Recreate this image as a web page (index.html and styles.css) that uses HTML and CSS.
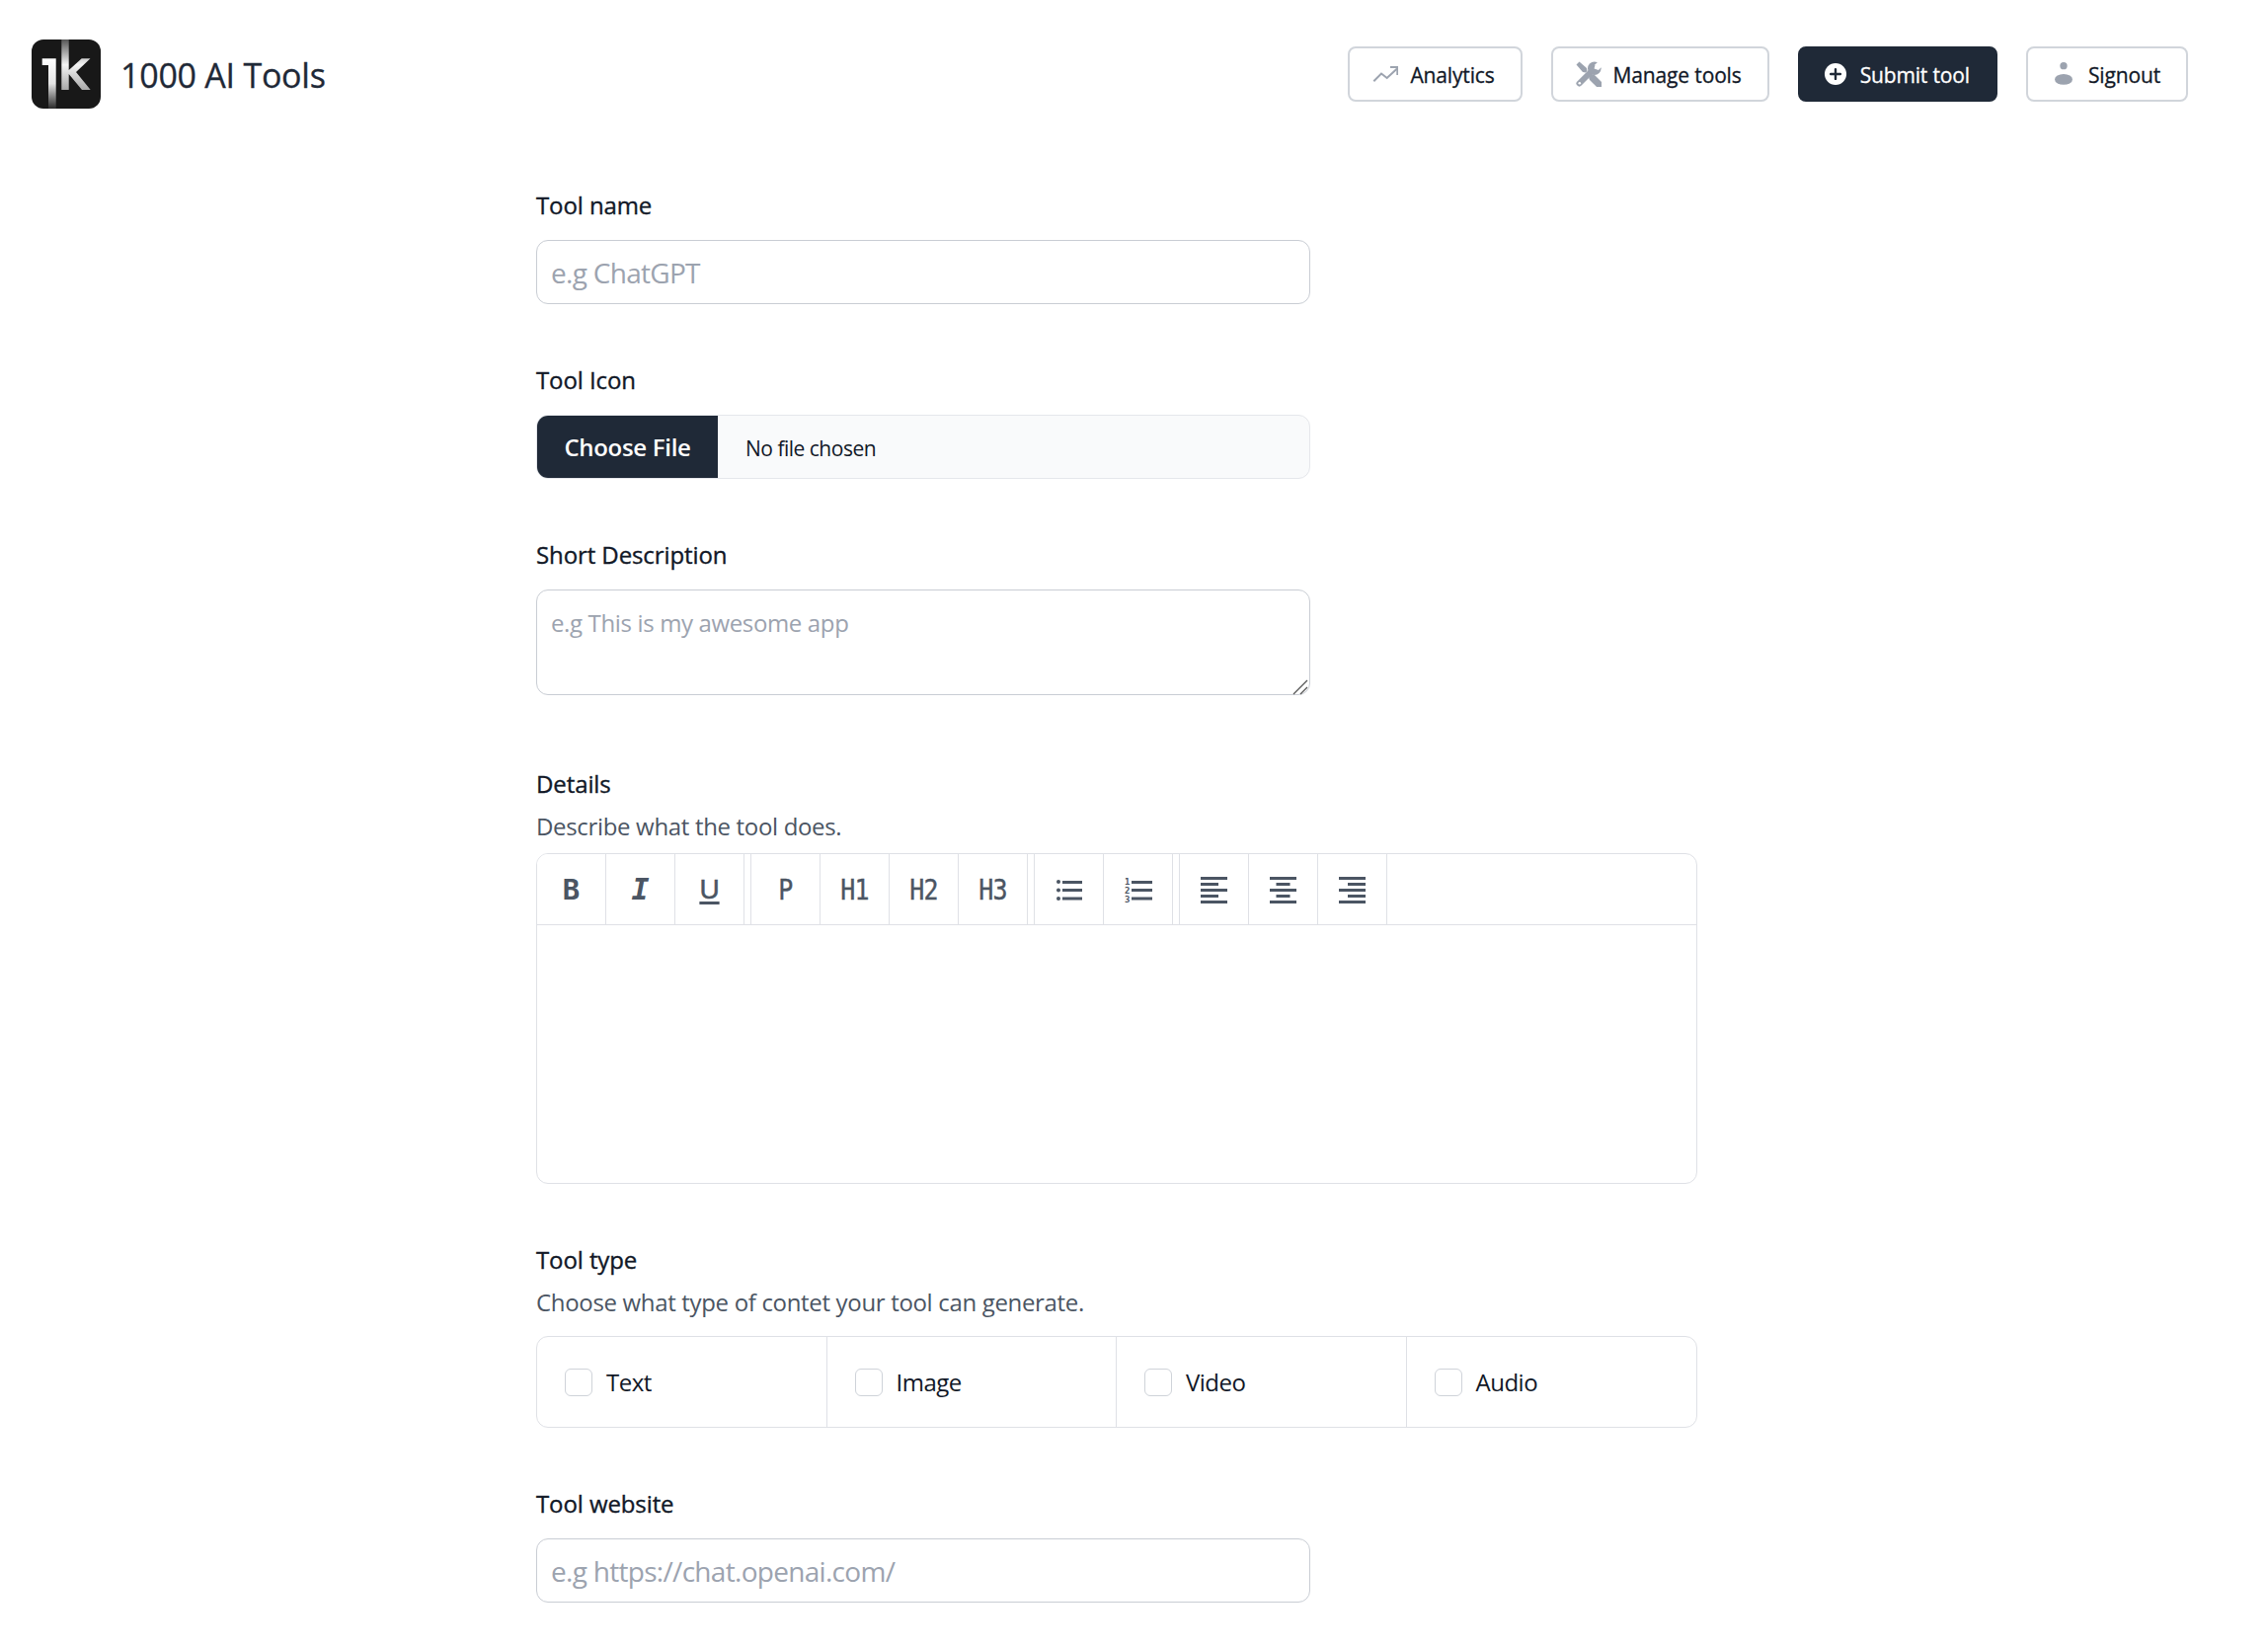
FILE: index.html
```html
<!DOCTYPE html>
<html lang="en">
<head>
<meta charset="utf-8">
<title>1000 AI Tools</title>
<link rel="stylesheet" href="styles.css">
</head>
<body>
<header class="topbar">
  <a class="brand">
    <svg class="logo" viewBox="0 0 70 70" aria-hidden="true">
      <defs>
        <linearGradient id="one" x1="0" y1="0" x2="0" y2="1"><stop offset="0" stop-color="#fff"/><stop offset=".5" stop-color="#e4e4e4"/><stop offset="1" stop-color="#2a2a2a"/></linearGradient>
        <linearGradient id="kay" x1="0" y1="0" x2="0" y2="1"><stop offset="0" stop-color="#555"/><stop offset=".5" stop-color="#f4f4f4"/><stop offset="1" stop-color="#a8a8a8"/></linearGradient>
      </defs>
      <rect width="70" height="70" rx="12" fill="#181818"/>
      <polygon points="10.7,19.3 24.7,19.3 24.7,70 17,70 17,26 10.7,26" fill="url(#one)"/>
      <polygon points="30.3,0 37.7,0 37.7,31 50.7,19.3 59.5,19.3 45,33 59.7,51 51,51 37.7,35 37.7,51 30.3,51" fill="url(#kay)"/>
    </svg>
    <span class="brand-name">1000 AI Tools</span>
  </a>
  <nav class="actions">
    <a class="btn">
      <svg class="btn-icon" viewBox="0 0 26 26" fill="none" stroke="#9ca3af" stroke-width="2" stroke-linejoin="miter"><path d="M1.300 20.300L9 12.500l5.700 4.500L25 7.500"/><path d="M18 6h7.300v8"/></svg>
      <span class="btn-label">Analytics</span>
    </a>
    <a class="btn">
      <svg class="btn-icon" viewBox="0 0 26 26">
        <path d="M0.500 3.500L3.500 0.500l7.500 6.500 .5 3-1.500 1.500-3-.5z" fill="#9ca3af"/>
        <path d="M17 17l7 7" stroke="#9ca3af" stroke-width="7" stroke-linecap="round"/>
        <path d="M3.500 22.500L15 11" stroke="#9ca3af" stroke-width="6" stroke-linecap="round"/>
        <circle cx="18.800" cy="7.200" r="6.800" fill="#9ca3af"/>
        <path d="M18.600 7.400l1-4.200 4-3.700h3v6l-3.700 3.500z" fill="#fff"/>
        <circle cx="3.800" cy="22.200" r="1.300" fill="#fff"/>
      </svg>
      <span class="btn-label">Manage tools</span>
    </a>
    <a class="btn btn-dark">
      <svg class="btn-icon" viewBox="0 0 24 24"><circle cx="12" cy="12" r="10.200" fill="#fff"/><path d="M12 7.500v9M7.500 12h9" stroke="#1f2937" stroke-width="2.200" stroke-linecap="round"/></svg>
      <span class="btn-label">Submit tool</span>
    </a>
    <a class="btn">
      <svg class="btn-icon" viewBox="0 0 24 24" fill="#9ca3af"><circle cx="12" cy="4.300" r="3.400"/><ellipse cx="12" cy="17" rx="8.300" ry="5"/></svg>
      <span class="btn-label">Signout</span>
    </a>
  </nav>
</header>

<main class="form">
  <section class="field">
    <label class="label" for="name">Tool name</label>
    <input class="input" id="name" type="text" placeholder="e.g ChatGPT">
  </section>

  <section class="field">
    <label class="label" for="icon">Tool Icon</label>
    <input class="file" id="icon" type="file">
  </section>

  <section class="field field-short">
    <label class="label" for="short">Short Description</label>
    <div class="textarea-wrap">
      <textarea class="textarea" id="short" placeholder="e.g This is my awesome app"></textarea>
      <svg class="grip" viewBox="0 0 16 16" fill="none" stroke="#555" stroke-width="1.300"><path d="M1 15L15 1M8 15l7-7"/></svg>
    </div>
  </section>

  <section class="field">
    <label class="label label-tight">Details</label>
    <p class="hint">Describe what the tool does.</p>
    <div class="editor">
      <div class="toolbar">
        <div class="tool-group">
          <button class="tool glyph-b">B</button>
          <button class="tool glyph-i">I</button>
          <button class="tool glyph-u">U</button>
        </div>
        <div class="tool-group">
          <button class="tool glyph-h"><span>P</span></button>
          <button class="tool glyph-h"><span>H1</span></button>
          <button class="tool glyph-h"><span>H2</span></button>
          <button class="tool glyph-h"><span>H3</span></button>
        </div>
        <div class="tool-group">
          <button class="tool"><svg class="tool-icon" viewBox="0 0 28 28" fill="#4b5563"><circle cx="3" cy="6" r="2"/><circle cx="3" cy="14.500" r="2"/><circle cx="3" cy="23" r="2"/><rect x="7" y="5" width="20" height="3"/><rect x="7" y="13" width="20" height="3"/><rect x="7" y="21.500" width="20" height="3"/></svg></button>
          <button class="tool"><svg class="tool-icon" viewBox="0 0 28 28" fill="#4b5563"><text class="ol-num" x="0" y="9">1</text><text class="ol-num" x="0" y="18">2</text><text class="ol-num" x="0" y="27">3</text><rect x="7" y="5" width="21" height="3"/><rect x="7" y="13" width="21" height="3"/><rect x="7" y="21.500" width="21" height="3"/></svg></button>
        </div>
        <div class="tool-group">
          <button class="tool"><svg class="tool-icon" viewBox="0 0 28 28" fill="#4b5563"><rect y="1" width="27" height="3"/><rect y="7" width="18" height="3"/><rect y="13" width="27" height="3"/><rect y="19" width="18" height="3"/><rect y="25" width="27" height="3"/></svg></button>
          <button class="tool"><svg class="tool-icon" viewBox="0 0 28 28" fill="#4b5563"><rect y="1" width="27" height="3"/><rect x="6.500" y="7" width="14" height="3"/><rect y="13" width="27" height="3"/><rect x="6.500" y="19" width="14" height="3"/><rect y="25" width="27" height="3"/></svg></button>
          <button class="tool"><svg class="tool-icon" viewBox="0 0 28 28" fill="#4b5563"><rect y="1" width="27" height="3"/><rect x="9" y="7" width="18" height="3"/><rect y="13" width="27" height="3"/><rect x="9" y="19" width="18" height="3"/><rect y="25" width="27" height="3"/></svg></button>
        </div>
      </div>
      <div class="editor-body"></div>
    </div>
  </section>

  <section class="field">
    <label class="label label-tight">Tool type</label>
    <p class="hint hint-wide">Choose what type of contet your tool can generate.</p>
    <div class="choices">
      <label class="choice"><input class="check" type="checkbox">Text</label>
      <label class="choice"><input class="check" type="checkbox">Image</label>
      <label class="choice"><input class="check" type="checkbox">Video</label>
      <label class="choice"><input class="check" type="checkbox">Audio</label>
    </div>
  </section>

  <section class="field">
    <label class="label" for="site">Tool website</label>
    <input class="input" id="site" type="text" placeholder="e.g https://chat.openai.com/">
  </section>
</main>
</body>
</html>
```
FILE: styles.css
```css
* { box-sizing: border-box; }
html, body { margin: 0; padding: 0; background: #fff; }
body {
  font-family: "Open Sans", "Noto Sans", "Liberation Sans", sans-serif;
  color: #111827;
  overflow: hidden;
  height: 1669px;
}
.topbar {
  display: flex;
  justify-content: space-between;
  align-items: flex-start;
  padding: 40px 81px 40px 32px;
  height: 191px;
}
.brand { display: flex; align-items: center; gap: 20px; height: 70px; }
.logo { width: 70px; height: 70px; display: block; }
.brand-name { font-size: 34px; color: #1f2937; letter-spacing: -.25px; padding-top: 2px; -webkit-text-stroke: .3px #1f2937; }
.actions { display: flex; gap: 29px; margin-top: 7px; }
.btn {
  display: flex;
  align-items: center;
  gap: 12px;
  height: 56px;
  padding: 0 26px 0 23px;
  border: 2px solid #d1d5db;
  border-radius: 8px;
  font-size: 21px;
  letter-spacing: -.15px;
  color: #111827;
  background: #fff;
  -webkit-text-stroke: .3px currentColor;
}
.btn-label { padding-top: 2px; }
.btn-dark { background: #1f2937; border-color: #1f2937; color: #fff; }
.btn-icon { width: 26px; height: 26px; flex: none; }

.form { margin-left: 543px; width: 1176px; }
.field { margin-bottom: 60px; }
.field-short { margin-bottom: 73px; }
.label {
  display: block;
  font-size: 24px;
  line-height: 34px;
  padding-bottom: 2px;
  margin-bottom: 16px;
  color: #111827;
  letter-spacing: -.1px;
  -webkit-text-stroke: .35px #111827;
}
.label-tight { margin-bottom: 6px; }
.hint {
  margin: 0 0 9px;
  font-size: 24px;
  line-height: 36px;
  letter-spacing: -.33px;
  color: #4b5563;
}
.hint-wide { margin-bottom: 16px; }
.input, .textarea {
  display: block;
  width: 784px;
  border: 1px solid #c9cdd4;
  border-radius: 12px;
  background: #fff;
  font-family: inherit;
  outline: none;
  color: #111827;
}
.input { height: 65px; padding: 0 14px; font-size: 28px; letter-spacing: -.7px; }
.textarea { height: 107px; padding: 16px 14px; font-size: 24px; line-height: 34px; letter-spacing: -.36px; resize: none; }
.input::placeholder, .textarea::placeholder { color: #9ca3af; opacity: 1; }
.textarea-wrap { position: relative; width: 784px; }
.grip { position: absolute; right: 2px; bottom: 0; width: 16px; height: 16px; }
.file {
  display: block;
  width: 784px;
  height: 65px;
  border: 1px solid #e5e7eb;
  border-radius: 12px;
  background: #f9fafb;
  font-family: inherit;
  font-size: 21px;
  letter-spacing: -.5px;
  color: #111827;
  padding: 0;
  line-height: 63px;
  overflow: hidden;
}
.file::file-selector-button {
  height: 63px;
  width: 183px;
  margin-right: 28px;
  border: 0;
  background: #1f2937;
  color: #fff;
  font-family: inherit;
  font-size: 24px;
  font-weight: 600;
  letter-spacing: -.3px;
}
.editor {
  border: 1px solid #dfe1e6;
  border-radius: 12px;
  height: 335px;
  overflow: hidden;
}
.toolbar { display: flex; height: 72px; border-bottom: 1px solid #dfe1e6; }
.tool-group { display: flex; margin-right: 6px; border-left: 1px solid #dfe1e6; }
.tool-group:first-child { border-left: 0; }
.tool {
  display: flex;
  align-items: center;
  justify-content: center;
  width: 70px;
  height: 100%;
  padding: 0;
  border: 0;
  border-right: 1px solid #dfe1e6;
  background: #fff;
  color: #4b5563;
}
.tool-icon { width: 28px; height: 28px; display: block; }
.glyph-b { font: 700 29px "DejaVu Sans Mono", monospace; }
.glyph-i { font: italic 700 30px "DejaVu Sans Mono", monospace; }
.glyph-u { font: 400 28px "Liberation Sans", sans-serif; text-decoration: underline; text-decoration-thickness: 2.500px; text-underline-offset: 3px; -webkit-text-stroke: .5px #4b5563; }
.glyph-h { font: 400 29px "DejaVu Sans Mono", monospace; -webkit-text-stroke: .4px #4b5563; }
.glyph-h span { display: block; transform: scaleX(.86); letter-spacing: -1px; }
.ol-num { font: 700 9px "DejaVu Sans Mono", monospace; }
.choices {
  display: grid;
  grid-template-columns: repeat(4, 1fr);
  height: 93px;
  border: 1px solid #dfe1e6;
  border-radius: 12px;
}
.choice {
  display: flex;
  align-items: center;
  gap: 14px;
  padding-left: 28px;
  font-size: 24px;
  letter-spacing: -.5px;
  color: #111827;
  border-right: 1px solid #dfe1e6;
}
.choice:last-child { border-right: 0; }
.check {
  appearance: none;
  width: 28px;
  height: 28px;
  margin: 0;
  border: 1px solid #cfd3d9;
  border-radius: 6px;
  background: #fff;
}
```
